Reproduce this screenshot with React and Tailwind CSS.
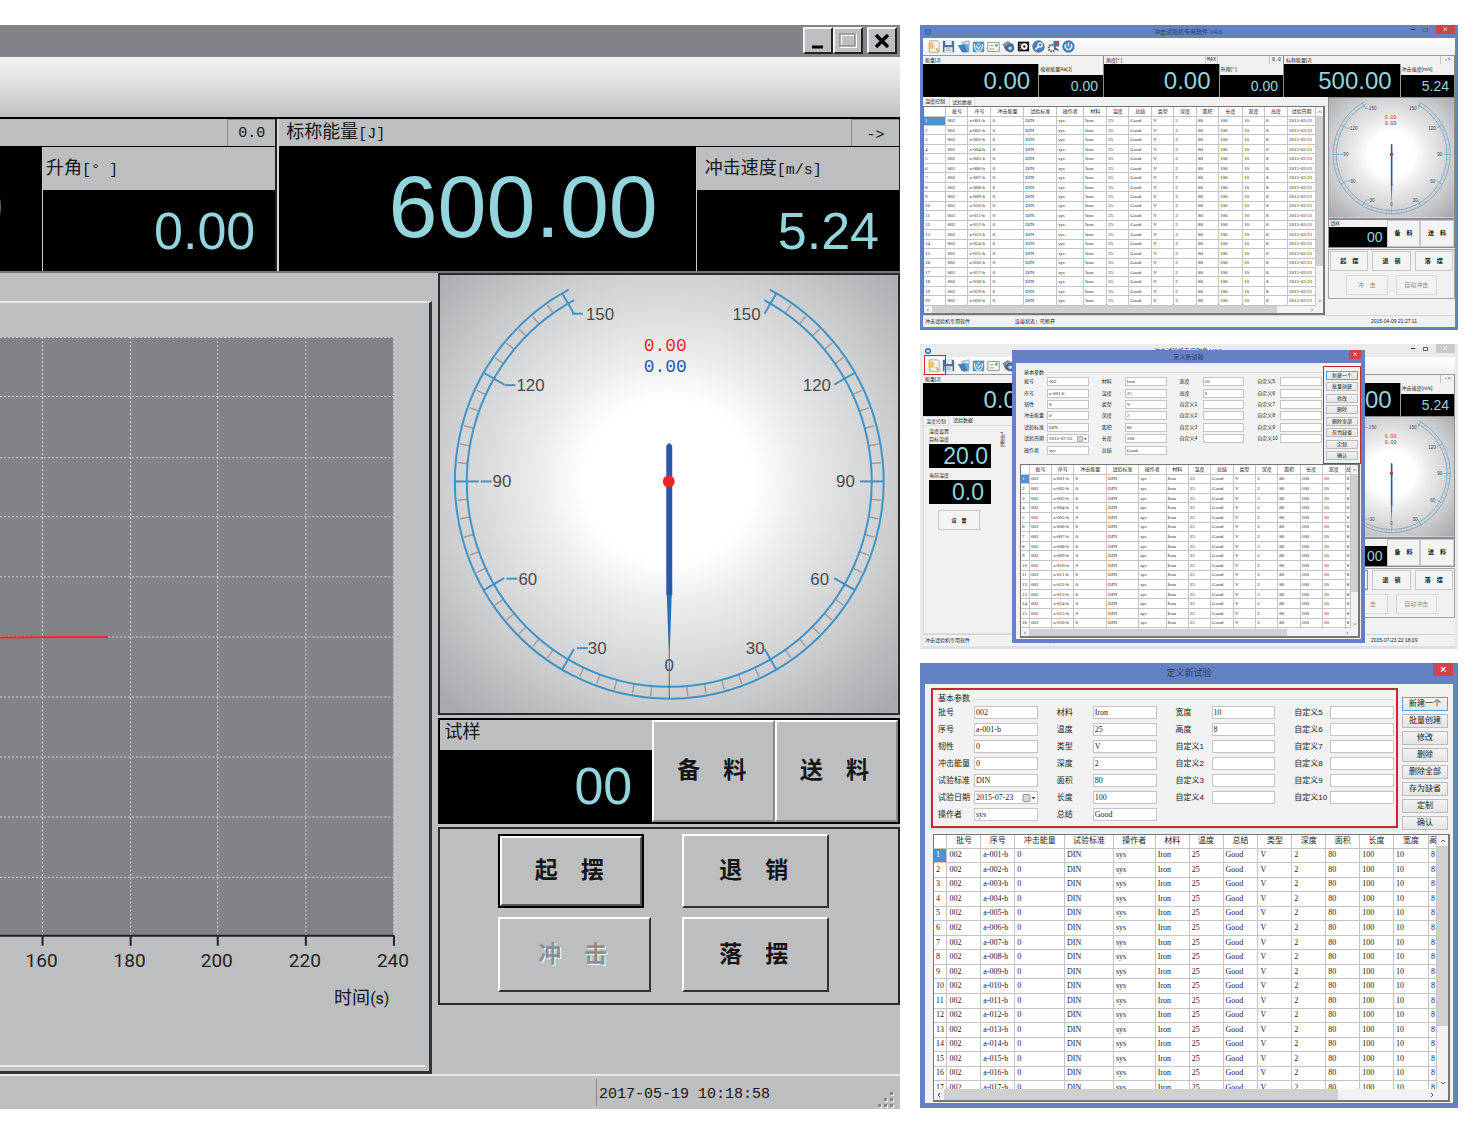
import React from "react";
import clsx from "clsx";

const COLUMNS_FULL = [
  ["", 22], ["批号", 22], ["序号", 23], ["冲击能量", 33], ["试验标准", 33], ["操作者", 27], ["材料", 23], ["温度", 22],
  ["总结", 23], ["类型", 22], ["深度", 23], ["面积", 22], ["长度", 24], ["宽度", 22], ["高度", 23], ["试验日期", 28],
];

const COLUMNS_DIALOG = [
  ["", 13], ["批号", 34], ["序号", 34], ["冲击能量", 50], ["试验标准", 49], ["操作者", 42], ["材料", 34], ["温度", 34],
  ["总结", 35], ["类型", 34], ["深度", 34], ["面积", 34], ["长度", 34], ["宽度", 35], ["高", 8],
];

const FIELDS = [
  ["批号", "002"], ["序号", "a-001-b"], ["韧性", "0"], ["冲击能量", "0"], ["试验标准", "DIN"], ["试验日期", "2015-07-23"], ["操作者", "sys"],
  ["材料", "Iron"], ["温度", "25"], ["类型", "V"], ["深度", "2"], ["面积", "80"], ["长度", "100"], ["总结", "Good"],
  ["宽度", "10"], ["高度", "8"], ["自定义1", ""], ["自定义2", ""], ["自定义3", ""], ["自定义4", ""], null,
  ["自定义5", ""], ["自定义6", ""], ["自定义7", ""], ["自定义8", ""], ["自定义9", ""], ["自定义10", ""], null,
];

const ACTIONS = ["新建一个", "批量创建", "修改", "删除", "删除全部", "存为缺省", "定制", "确认"];

const makeRow = (n) => [
  n, "002", `a-${String(n).padStart(3, "0")}-b`, "0", "DIN", "sys", "Iron", "25", "Good", "V", "2", "80", "100", "10", "8", "2015-03-21",
];

const Lcd = ({ className, children }) => (
  <span className={clsx("whitespace-nowrap font-['Liberation_Sans'] leading-none text-[#93d5dd]", className)}>{children}</span>
);

const Mono = ({ children }) => <span className="font-['Liberation_Mono'] text-[15px]">{children}</span>;

/* ---------- gauge ---------- */

const CX = 231;
const CY = 208;

// 0 points straight down, positive angles go to the right
const polar = (deg, inset = 0) => {
  const a = (deg * Math.PI) / 180;
  return [CX + (216 - inset) * Math.sin(a), CY + (219 - inset) * Math.cos(a)];
};

const arc = (inset) => {
  const [x1, y1] = polar(-152, inset);
  const [x2, y2] = polar(152, inset);
  return `M${x1} ${y1}A${216 - inset} ${219 - inset} 0 1 0 ${x2} ${y2}`;
};

// value, left label x, right label x, baseline, leader x
const GAUGE_LABELS = [
  [150, 147, 323, 45, 133], [120, 77, 394, 117, 65], [90, 53, 418, 214, 41], [60, 79, 392, 312, 67], [30, 149, 327, 382, 138],
];

const TICKS = Array.from({ length: 61 }, (_, i) => -150 + i * 5);

const Gauge = () => (
  <svg viewBox="0 0 461 441" className="block w-full" role="img" aria-label="摆锤角度">
    <defs>
      <radialGradient id="dial" cx="0.5" cy="0.47" r="0.7">
        <stop offset="0" stopColor="#fff" />
        <stop offset="0.26" stopColor="#fff" />
        <stop offset="0.42" stopColor="#ebebeb" />
        <stop offset="0.72" stopColor="#cbccce" />
        <stop offset="1" stopColor="#a9aaad" />
      </radialGradient>
    </defs>
    <rect width="461" height="441" fill="url(#dial)" />
    <g fill="none" stroke="#a39d9c" strokeWidth="1.5">
      {TICKS.filter((t) => t % 30 !== 0).map((t) => (
        <path key={t} d={`M${polar(t, 2)}L${polar(t, 12)}`} />
      ))}
    </g>
    <g fill="none" stroke="#3f93c6" strokeWidth="2">
      <path d={arc(0)} />
      <path d={arc(12)} />
      {TICKS.filter((t) => t % 30 === 0 && t !== 0).map((t) => (
        <path key={t} d={`M${polar(t, 0)}L${polar(t, 24)}`} />
      ))}
      {GAUGE_LABELS.map(([n, , , y, lead]) => (
        <path key={n} d={`M${lead} ${y - 6}h11`} />
      ))}
    </g>
    <g fill="#4a4a4c" fontFamily="Liberation Sans" fontSize="17">
      {GAUGE_LABELS.map(([n, left, right, y]) => (
        <React.Fragment key={n}>
          <text x={left} y={y}>{n}</text>
          <text x={right} y={y} textAnchor="end">{n}</text>
        </React.Fragment>
      ))}
      <text x={CX} y="399" textAnchor="middle">0</text>
    </g>
    <g fontFamily="Liberation Mono" fontSize="18" textAnchor="middle">
      <text x="227" y="77" fill="#ee2a2b">0.00</text>
      <text x="227" y="98" fill="#2c57a8">0.00</text>
    </g>
    <path d="M228 172l3-3 3 3v150l-3 5-3-5z" fill="#2c57a8" />
    <path d="M228.500 322h5l-2 58v47h-1v-47z" fill="#2c6db5" />
    <circle cx="230.500" cy="208" r="6" fill="#f02626" />
  </svg>
);

/* ---------- large window ---------- */

const WinButton = ({ label, children }) => (
  <button
    type="button"
    aria-label={label}
    className="flex h-[27px] w-[30px] items-center justify-center border-2 border-t-[#f2f2f2] border-r-[#222] border-b-[#222] border-l-[#f2f2f2] bg-[#bdbec0]"
  >
    <svg viewBox="0 0 24 22" className="h-[22px] w-6" fill="none">{children}</svg>
  </button>
);

const PanelButton = ({ className, children, ...rest }) => (
  <button
    type="button"
    className={clsx(
      "border-2 border-t-white border-l-white bg-[#bdbec0] pr-1 text-[23px] leading-none font-bold",
      className || "border-r-[#333] border-b-[#333]"
    )}
    {...rest}
  >
    {children}
  </button>
);

const GRID_X = [42.5, 130.5, 217.5, 305.5, 393.5];
const GRID_Y = [34.5, 93.5, 154.5, 213.5, 273.5, 333.5, 393.5, 453.5, 513.5, 573.5];

const TemperatureChart = () => (
  <svg viewBox="0 0 425 761" className="block w-full" role="img" aria-label="温度曲线">
    <rect y="34" width="393" height="598" fill="#828387" />
    <g stroke="#d3d4d6" strokeDasharray="2 2">
      {GRID_X.map((x) => <path key={x} d={`M${x} 34V632`} />)}
      {GRID_Y.map((y) => <path key={y} d={`M0 ${y}H393`} />)}
    </g>
    <path d="M0 334L60 333.500H108" stroke="#ee2a2b" strokeWidth="2" fill="none" />
    <path d="M0 632H394" stroke="#222" strokeWidth="2" />
    <g fill="#222" fontFamily="Roboto" fontSize="19" textAnchor="middle">
      {GRID_X.map((x, i) => (
        <React.Fragment key={x}>
          <path d={`M${x} 632v10`} stroke="#222" strokeWidth="2" />
          <text x={x - 1} y="663">{160 + i * 20}</text>
        </React.Fragment>
      ))}
    </g>
    <text x="389" y="700" textAnchor="end" fontSize="18" fill="#111">
      时间<tspan fontFamily="Roboto" fontSize="16">(s)</tspan>
    </text>
  </svg>
);

const MainWindow = () => (
  <section className="min-w-0 overflow-hidden bg-[#bdbec0] text-[18px] leading-none text-[#151515]">
    <header className="flex h-8 justify-end bg-[#828387] pt-[2px] pr-[3px]">
      <WinButton label="最小化"><path d="M6 17h11" stroke="#000" strokeWidth="3" /></WinButton>
      <WinButton label="最大化">
        <path d="M5 5h15v12H5z" stroke="#fff" strokeWidth="2" />
        <path d="M4 4h15v12H4z" stroke="#8b8c90" strokeWidth="1.5" />
      </WinButton>
      <div className="ml-1 flex">
        <WinButton label="关闭"><path d="M6 5l12 12M18 5L6 17" stroke="#000" strokeWidth="3.500" /></WinButton>
      </div>
    </header>
    <div className="h-[60px] bg-linear-to-b from-[#f3f3f3] via-[#dcdcdc] to-[#c0c1c3]" />

    <div className="grid grid-cols-[277fr_622fr] border-t-2 border-black">
      <div className="min-w-0 border-r-2 border-[#222]">
        <div className="flex h-7 justify-end border-b border-black">
          <span className="flex w-12 items-center justify-center border-t border-l border-[#88898c]"><Mono>0.0</Mono></span>
        </div>
        <div className="grid h-[124px] grid-cols-[42fr_233fr] bg-black">
          <div className="flex min-w-0 items-center justify-end overflow-hidden pr-[38px] pb-1"><Lcd className="text-[88px]">0.00</Lcd></div>
          <div className="flex flex-col border-l border-[#c9cacc]">
            <div className="h-[43px] bg-[#bdbec0] px-[3px] py-3">升角<Mono>[° ]</Mono></div>
            <div className="flex flex-1 items-center justify-end pr-5"><Lcd className="text-[52px]">0.00</Lcd></div>
          </div>
        </div>
      </div>
      <div className="min-w-0 border-r border-l-2 border-r-[#222] border-l-[#d5d6d8]">
        <div className="flex h-7 items-center justify-between border-b border-black pl-[7px]">
          <span>标称能量<Mono>[J]</Mono></span>
          <button type="button" className="h-full w-12 border-t border-l border-[#88898c]"><Mono>-&gt;</Mono></button>
        </div>
        <div className="grid h-[124px] grid-cols-[416fr_203fr] bg-black">
          <div className="flex items-center justify-end pr-[38px] pb-1"><Lcd className="text-[88px]">600.00</Lcd></div>
          <div className="flex flex-col border-l border-[#c9cacc]">
            <div className="h-[43px] bg-[#bdbec0] px-2 py-3">冲击速度<Mono>[m/s]</Mono></div>
            <div className="flex flex-1 items-center justify-end pr-5"><Lcd className="text-[52px]">5.24</Lcd></div>
          </div>
        </div>
      </div>
    </div>

    <div className="grid grid-cols-[438fr_461fr] border-t-2 border-[#777]">
      <div className="pt-7 pr-[6px]">
        <div className="border-t-2 border-r-3 border-b-3 border-t-[#e8e8e8] border-r-[#333] border-b-[#333]">
          <div className="mr-1 border-b-2 border-[#e8ebea]">
            <TemperatureChart />
          </div>
          <div className="h-1" />
        </div>
      </div>
      <div className="flex flex-col gap-[3px]">
        <div className="border-2 border-[#2a2a2b]"><Gauge /></div>
        <div className="grid h-[106px] grid-cols-[212fr_123fr_123fr] border-2 border-black bg-black">
          <div className="flex flex-col">
            <div className="h-[30px] bg-[#bdbec0] px-1 pt-[3px]">试样</div>
            <div className="flex flex-1 items-center justify-end pr-5"><Lcd className="text-[52px]">00</Lcd></div>
          </div>
          <PanelButton className="border-r-[#88898c] border-b-[#88898c]">备　料</PanelButton>
          <PanelButton className="border-r-[#88898c] border-b-[#88898c]">送　料</PanelButton>
        </div>
        <div className="grid grid-cols-[152fr_146fr] gap-x-[31px] gap-y-[9px] border-2 border-[#2a2a2b] pt-[5px] pr-[69px] pb-[11px] pl-[58px]">
          <div className="mr-[7px] border-2 border-black">
            <PanelButton className="h-[70px] w-full border-r-[#555] border-b-[#555]">起　摆</PanelButton>
          </div>
          <PanelButton>退　销</PanelButton>
          <PanelButton className="h-[75px] border-r-[#333] border-b-[#333] text-[#8d8e91] [text-shadow:1px_1px_0_#fff]" disabled>冲　击</PanelButton>
          <PanelButton>落　摆</PanelButton>
        </div>
      </div>
    </div>

    <footer className="flex h-[35px] items-center justify-end border-t-2 border-[#e6e9e8] pr-1">
      <span className="mr-[108px] border-l border-[#88898c] py-1 pl-[2px]"><Mono>2017-05-19 10:18:58</Mono></span>
      <svg viewBox="0 0 18 18" className="h-[18px] w-[18px] self-end" fill="#85868a">
        {[[12, 1], [6, 7], [12, 7], [0, 13], [6, 13], [12, 13]].map(([x, y]) => (
          <g key={`${x}-${y}`}>
            <rect x={x + 1} y={y + 1} width="3" height="3" fill="#fff" />
            <rect x={x} y={y} width="3" height="3" />
          </g>
        ))}
      </svg>
    </footer>
  </section>
);

/* ---------- shared small parts ---------- */

const DataTable = ({ columns, rows, large, className }) => {
  const total = columns.reduce((sum, c) => sum + c[1], 0);
  return (
    <table className={clsx("w-full table-fixed border-collapse bg-white leading-none", className)}>
      <colgroup>
        {columns.map(([name, w], i) => <col key={name + i} style={{ width: `${(w / total) * 100}%` }} />)}
      </colgroup>
      <thead>
        <tr className={large ? "h-[13px]" : "h-[9px]"}>
          {columns.map(([name], i) => (
            <th key={name + i} className="overflow-hidden border-r border-b border-[#c4c4c4] p-0 font-normal whitespace-nowrap">{name}</th>
          ))}
        </tr>
      </thead>
      <tbody className={clsx("font-['Liberation_Serif']", large ? "text-[8px]" : "text-[5px]")}>
        {Array.from({ length: rows }, (_, r) => (
          <tr key={r}>
            {makeRow(r + 1).slice(0, columns.length).map((cell, c) => (
              <td
                key={c}
                className={clsx(
                  "overflow-hidden border-r border-b border-[#c4c4c4] py-0 pr-0 whitespace-nowrap",
                  large ? "pl-[2px]" : "pl-px",
                  r === 0 && c === 0 && "bg-[#4f93d5] text-white"
                )}
              >
                {cell}
              </td>
            ))}
          </tr>
        ))}
      </tbody>
    </table>
  );
};

const Arrow = ({ d, className }) => (
  <svg viewBox="0 0 6 6" className={clsx("shrink-0", className)} fill="none" stroke="#555"><path d={d} /></svg>
);

const ScrollFrame = ({ large, height, thumbs, children }) => {
  const bar = large ? "w-[11px]" : "w-[7px]";
  const arrow = large ? "h-[6px] w-[6px]" : "h-1 w-1";
  return (
    <div className="border-t border-r-2 border-b-2 border-l border-[#77777a] bg-[#f2f2f2]">
      <div className={clsx("flex overflow-hidden", height)}>
        <div className="min-w-0 flex-1">{children}</div>
        <div className={clsx("flex shrink-0 flex-col items-center py-[3px]", bar)}>
          <Arrow d="M1 4l2-2 2 2" className={arrow} />
          <div className={clsx("my-[2px] w-full bg-[#d0d0d1]", thumbs[0])} />
          <Arrow d="M1 2l2 2 2-2" className={clsx(arrow, "mt-auto")} />
        </div>
      </div>
      <div className={clsx("flex items-center justify-between pl-[2px]", large ? "h-[11px] pr-[13px]" : "h-[7px] pr-[9px]")}>
        <Arrow d="M4 1L2 3l2 2" className={arrow} />
        <div className={clsx("mr-auto ml-[2px] h-full bg-[#d0d0d1]", thumbs[1])} />
        <Arrow d="M2 1l2 2-2 2" className={arrow} />
      </div>
    </div>
  );
};

const SpecForm = ({ large }) => (
  <div className={clsx("grid grid-flow-col grid-cols-4 grid-rows-7", large ? "h-[119px] gap-x-[19px]" : "h-20 gap-x-[13px]")}>
    {FIELDS.map((field, i) =>
      field ? (
        <label key={field[0] + i} className="flex min-w-0 items-center whitespace-nowrap">
          <span className={clsx("shrink-0", large ? "w-9" : "w-[23px]")}>{field[0]}</span>
          <span
            className={clsx(
              "flex min-w-0 flex-1 items-center border border-[#c3c4c6] bg-white font-['Liberation_Serif']",
              large ? "h-[13px] text-[8px]" : "h-[9px] text-[5px]"
            )}
          >
            <input type="text" defaultValue={field[1]} className="h-full w-full min-w-0 flex-1 bg-transparent pl-px leading-none outline-none" />
            {field[0] === "试验日期" && (
              <svg viewBox="0 0 16 8" className={clsx("shrink-0", large ? "h-2 w-4" : "h-[6px] w-3")}>
                <rect x="2" y="0.500" width="7" height="7" rx="1" fill="#d4d7dc" stroke="#8d9199" />
                <path d="M10.500 3h4l-2 2.500z" fill="#555" />
              </svg>
            )}
          </span>
        </label>
      ) : (
        <span key={i} />
      )
    )}
  </div>
);

const ActionList = ({ large }) => (
  <div className={clsx("flex flex-col justify-between", large ? "h-[133px]" : "h-[89px]")}>
    {ACTIONS.map((name, i) => (
      <button
        key={name}
        type="button"
        className={clsx(
          "w-full border bg-linear-to-b from-[#f3f3f3] to-[#e4e4e4] leading-none whitespace-nowrap",
          large ? "h-[14px]" : "h-[9px]",
          i === 0 ? "border-[#5aa5dd]" : "border-[#bcbcbd]"
        )}
      >
        {name}
      </button>
    ))}
  </div>
);

const CloseButton = ({ className }) => (
  <button type="button" aria-label="关闭" className={clsx("flex items-center justify-center bg-[#d5414b]", className)}>
    <svg viewBox="0 0 8 8" className="h-1/2" stroke="#fff" strokeWidth="1.500"><path d="M1 1l6 6M7 1L1 7" /></svg>
  </button>
);

/* ---------- small software windows ---------- */

const TOOL_ICONS = [
  <><path d="M3 1h10l2 2v12H3z" fill="#faf6ea" stroke="#8f98a3" /><path d="M5 1l1 3 3-1-1 3 2 1-2 1 1 3-3-1-1 2-1-2-3 1 1-3-2-1 2-1-1-3 3 1z" fill="#f5bf73" /><path d="M11 10l3 4" stroke="#e8a040" strokeWidth="2" /></>,
  <><path d="M1 1h13l1 1v13H1z" fill="#4f7190" /><path d="M4 1h8v5H4zM3 9h10v6H3z" fill="#e6edf2" /><path d="M5 11h6M5 13h6" stroke="#8ba0b3" /></>,
  <><path d="M4 4l9-3v4z" fill="#bcd8ee" /><path d="M6 4h9v11H7z" fill="#6aa7d6" /><path d="M1 6h8l4 9H6z" fill="#3f80b8" /><path d="M5 3l10-2v5" fill="#d7e7f3" stroke="#7fa9c9" /></>,
  <><path d="M1 2h14v13H1z" fill="#4a94c8" /><path d="M3 5c0 12 10 12 10 0M5 7l3 4 3-4" fill="none" stroke="#e4f3fb" strokeWidth="1.500" /><circle cx="8" cy="5" r="1.500" fill="#a8d8ef" /></>,
  <><path d="M1 3h14v11H1z" fill="#f6f8f4" stroke="#7b857c" /><path d="M3 7h5M3 11h6" stroke="#7c9a85" /><path d="M10 5h3v3h-3z" fill="#57b06a" /></>,
  <><path d="M1 6l6-4 7 4-6 4z" fill="#8d98a8" stroke="#50607a" /><circle cx="10" cy="10" r="4.500" fill="#4a7db5" stroke="#2d4a70" /><circle cx="10" cy="10" r="2" fill="#c3dcf0" /><path d="M3 8l3 5" stroke="#50607a" strokeWidth="2" /></>,
  <><path d="M1 2h14v12H1z" fill="#15171a" /><path d="M3 5h2M3 8h1M3 11h2" stroke="#fff" /><circle cx="9" cy="8" r="4" fill="#fff" /><circle cx="9" cy="8" r="1.500" fill="#222" /></>,
  <><circle cx="8" cy="8" r="7" fill="#4a83bd" stroke="#2c5d92" /><path d="M4 12l5-5" stroke="#fff" strokeWidth="2" /><circle cx="10" cy="6" r="2.500" fill="none" stroke="#fff" strokeWidth="1.500" /></>,
  <><circle cx="6" cy="10" r="4" fill="none" stroke="#55636f" strokeWidth="2.500" strokeDasharray="2 1" /><path d="M8 1h7v7H8z" fill="#3e6fae" /><path d="M10 2h4v3h-4z" fill="#dd4040" /><path d="M9 9l5 4" stroke="#4b5c6a" strokeWidth="2" /></>,
  <><circle cx="8" cy="8" r="7" fill="#4b86bd" stroke="#2c5d92" /><path d="M5 5a4 4 0 1 0 6 0" fill="none" stroke="#fff" strokeWidth="1.500" /><path d="M8 3v5" stroke="#fff" strokeWidth="1.500" /></>,
];

const Readout = ({ title, value, subTitle, subValue, subWidth, corner, max }) => (
  <div className="min-w-0 border-r border-[#888]">
    <div className="flex h-2 items-center justify-between bg-[#f2f1f1] pl-[2px]">
      <span>{title}</span>
      <span className="flex h-full font-['Liberation_Mono']">
        {max && <span className="mr-[51px] flex w-[13px] items-center justify-center border-x border-[#c6c6c6]">{max}</span>}
        {corner && <span className="flex w-[14px] items-center justify-center border-l border-[#c6c6c6]">{corner}</span>}
      </span>
    </div>
    <div className="flex h-[33px] bg-black">
      <div className="flex flex-1 items-center justify-end pr-2"><Lcd className="text-[24px]">{value}</Lcd></div>
      <div className={clsx("flex flex-col border-l border-[#999]", subWidth)}>
        <div className="flex h-[11px] items-center bg-[#f2f1f1] pl-px whitespace-nowrap">{subTitle}</div>
        <div className="flex flex-1 items-center justify-end pr-[5px]"><Lcd className="text-[14px]">{subValue}</Lcd></div>
      </div>
    </div>
  </div>
);

const MiniButton = ({ className, ...rest }) => (
  <button type="button" className={clsx("border bg-[#f3f3f3] leading-none whitespace-nowrap", className || "border-[#c8c8c9] font-bold")} {...rest} />
);

const MiniControls = ({ focused }) => (
  <div className="flex min-w-0 flex-col text-[6px]">
    <div className="border border-[#8c8c8e]"><Gauge /></div>
    <div className="grid h-[29px] grid-cols-[58fr_34fr_34fr] border border-[#8c8c8e]">
      <div className="flex flex-col bg-black">
        <div className="h-[7px] bg-[#f2f1f1] pl-px text-[5px] leading-[7px]">试样</div>
        <div className="flex flex-1 items-center justify-end pr-1"><Lcd className="text-[14px]">00</Lcd></div>
      </div>
      <MiniButton>备　料</MiniButton>
      <MiniButton>送　料</MiniButton>
    </div>
    <div className="mt-px flex flex-col gap-1 border border-[#a5a5a7] pt-px pb-[3px]">
      <div className="grid h-5 grid-cols-3 gap-1 px-px">
        <MiniButton className={clsx("font-bold", focused ? "border-[#5aa5dd]" : "border-[#c8c8c9]")}>起　摆</MiniButton>
        <MiniButton>退　销</MiniButton>
        <MiniButton>落　摆</MiniButton>
      </div>
      <div className="grid h-5 grid-cols-2 gap-2 px-[17px]">
        <MiniButton disabled className="border-[#dadadb] text-[#8d8d8f]">冲　击</MiniButton>
        <MiniButton disabled className="border-[#dadadb] text-[#8d8d8f]">自动冲击</MiniButton>
      </div>
    </div>
  </div>
);

const Tab = ({ on, children }) => (
  <button type="button" className={clsx("h-full px-[2px] leading-none", on && "border border-b-0 border-[#d4d4d4] bg-white")}>{children}</button>
);

const SoftwareWindow = ({ inactive, tab, clock, children }) => (
  <div
    className={clsx(
      "border-x-3 border-b-3 bg-[#f2f1f1] text-[5px] leading-none text-[#222]",
      inactive ? "border-x-[#ecebeb] border-b-[#dcdde8]" : "border-[#6482c3]"
    )}
  >
    <header className={clsx("relative flex h-[13px] items-center justify-between", inactive ? "bg-[#ecebeb]" : "bg-[#6482c3]")}>
      <svg viewBox="0 0 8 8" className="ml-[2px] h-[6px] w-[6px]" fill="none" stroke="#2a6cab" strokeWidth="2"><circle cx="4" cy="4" r="3" /></svg>
      <h2 className="text-[6px] text-[#2c3a66]">冲击试验机专用软件 V4.6</h2>
      <div className="absolute top-0 right-0 flex h-[9px] items-center gap-2">
        <span className="h-px w-1 bg-[#333]" />
        <span className="h-1 w-[5px] border border-[#666]" />
        <CloseButton className={clsx("h-full w-[19px]", inactive && "bg-[#c9c9ca]!")} />
      </div>
      <span className="w-[10px]" />
    </header>
    <div className="flex h-[17px] items-center gap-[2px] bg-linear-to-b from-white to-[#f1f0f0] pl-1">
      {TOOL_ICONS.map((icon, i) => (
        <button key={i} type="button" aria-label={`工具 ${i + 1}`} className="h-[13px] w-[13px]">
          <svg viewBox="0 0 16 16" className="h-full w-full">{icon}</svg>
        </button>
      ))}
    </div>
    <div className="grid grid-cols-[181fr_180fr_171fr] border-t border-[#999]">
      <Readout title="能量[J]" value="0.00" subTitle="吸收能量Aa[J]" subValue="0.00" subWidth="w-[36%]" />
      <Readout title="角度[° ]" value="0.00" subTitle="升角[° ]" subValue="0.00" subWidth="w-[36%]" corner="0.0" max="MAX" />
      <Readout title="标称能量[J]" value="500.00" subTitle="冲击速度[m/s]" subValue="5.24" subWidth="w-[32%]" corner="->" />
    </div>
    <div className="grid grid-cols-[402fr_127fr] gap-[3px]">
      <div className="min-w-0">
        <div className="flex h-[9px] items-center gap-[2px]">
          <Tab on={tab === 0}>温度控制</Tab>
          <Tab on={tab === 1}>试验数据</Tab>
        </div>
        {children}
      </div>
      <MiniControls focused={inactive} />
    </div>
    <footer className="flex h-3 items-center border-t border-[#d5d5d5] pl-[2px]">
      <span className="w-[17%]">冲击试验机专用软件</span>
      <span className="flex-1">连接状态：已断开</span>
      <span className="w-[84px] font-['Liberation_Sans']">{clock}</span>
    </footer>
  </div>
);

const TemperaturePane = () => (
  <div className="flex h-[209px] gap-[10px] border border-[#dcdcdc] pt-[3px] pl-[5px]">
    <div className="w-[62px]">
      <h3>温度设置</h3>
      <div className="mt-[3px]">目标温度</div>
      <div className="mt-[2px] flex h-6 items-center justify-end bg-black pr-[3px]"><Lcd className="text-[23px]">20.0</Lcd></div>
      <div className="mt-[5px]">当前温度</div>
      <div className="mt-[2px] flex h-6 items-center justify-end bg-black pr-[7px]"><Lcd className="text-[23px]">0.0</Lcd></div>
      <MiniButton className="mt-[6px] ml-[9px] h-5 w-[42px] border-[#c8c8c9] font-bold">设　置</MiniButton>
    </div>
    <div className="rotate-180 self-start pb-[3px] [writing-mode:vertical-rl]">温度℃</div>
  </div>
);

const SpecDialog = ({ large, className }) => (
  <div
    role="dialog"
    aria-label="定义新试验"
    className={clsx(
      "border-[#6482c3] bg-[#f3f2f2] leading-none text-[#222]",
      large ? "border-x-[5px] border-b-[5px] text-[8px]" : "border-x-4 border-b-4 text-[5px]",
      className
    )}
  >
    <header className={clsx("relative flex items-center justify-center bg-[#6482c3] text-[#2c3a66]", large ? "h-[21px] text-[9px]" : "h-[13px] text-[6px]")}>
      <h2>定义新试验</h2>
      <CloseButton className={clsx("absolute top-0 right-0", large ? "h-[13px] w-5" : "h-[9px] w-3")} />
    </header>
    {large ? (
      <div className="flex items-start justify-between pt-1 pr-[5px] pl-[6px]">
        <fieldset className="mr-1 min-w-0 flex-1 border-2 border-[#c32a33] pt-1 pr-[2px] pb-[3px] pl-[5px] shadow">
          <div className="flex h-[10px] items-center gap-1">基本参数<span className="h-px flex-1 bg-[#dedede]" /></div>
          <SpecForm large />
        </fieldset>
        <div className="w-[46px] pt-[9px]"><ActionList large /></div>
      </div>
    ) : (
      <div className="flex justify-between pl-2">
        <fieldset className="mr-px min-w-0 flex-1 pt-[6px]">
          <div className="flex h-[7px] items-center gap-1">基本参数<span className="h-px flex-1 bg-[#dedede]" /></div>
          <SpecForm />
        </fieldset>
        <div className="mt-[3px] w-[38px] border border-[#c32a33] px-[2px] pt-1 pb-[3px]"><ActionList /></div>
      </div>
    )}
    <div className={large ? "mt-1 mr-[3px] mb-px ml-2" : "mr-px mb-px ml-1"}>
      <ScrollFrame
        large={large}
        height={large ? "h-[254px]" : "h-[164px]"}
        thumbs={large ? ["h-[180px]", "w-[79%]"] : ["h-[118px]", "w-[79%]"]}
      >
        <DataTable columns={COLUMNS_DIALOG} rows={17} large={large} className={large ? "h-[261px]" : "h-[173px]"} />
      </ScrollFrame>
    </div>
  </div>
);

export default function App() {
  return (
    <main className="grid grid-cols-[900fr_538fr] items-start gap-5 bg-white pt-[25px] pr-4 pb-4 font-['Liberation_Sans','Noto_Sans_CJK_SC',sans-serif]">
      <MainWindow />
      <div className="flex min-w-0 flex-col gap-[14px]">
        <SoftwareWindow tab={1} clock="2015-04-09 21:27:11">
          <ScrollFrame height="h-[199px]" thumbs={["h-[150px]", "w-[89%]"]}>
            <DataTable columns={COLUMNS_FULL} rows={20} className="h-[199px]" />
          </ScrollFrame>
        </SoftwareWindow>
        <div className="relative">
          <SoftwareWindow inactive tab={0} clock="2015-07-23 22:18:29">
            <TemperaturePane />
          </SoftwareWindow>
          <span className="absolute top-[11px] left-1 h-5 w-[22px] border border-[#d02a33]" />
          <SpecDialog className="absolute top-[6px] right-[93px] left-[92px]" />
        </div>
        <SpecDialog large />
      </div>
    </main>
  );
}
